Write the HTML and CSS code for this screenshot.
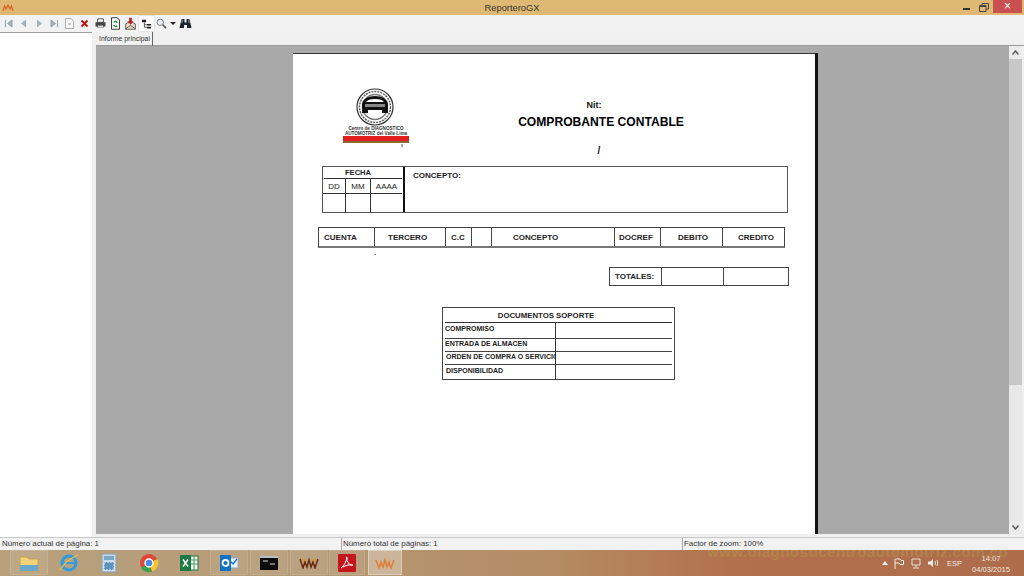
FILE: index.html
```html
<!DOCTYPE html>
<html>
<head>
  <meta charset="UTF-8">
  <title>ReporteroGX</title>
  <link rel="stylesheet" href="styles.css">
</head>
<body>
  <div class="window">
    <div class="titlebar">
      <svg class="app-icon" width="12" height="8" viewBox="0 0 12 8"><path d="M1 7 L2.5 2 L4 5 L6 1 L8 5 L9.5 2 L11 7" fill="none" stroke="#d9662a" stroke-width="1.3"/></svg>
      <div class="title">ReporteroGX</div>
      <div class="win-controls">
        <div class="win-min"></div>
        <svg class="win-restore" width="10" height="9" viewBox="0 0 10 9"><path d="M3 2 V0.5 H9.5 V6 H7.5 M0.5 2.5 H7 V8.5 H0.5 Z M0.5 3.5 H7" fill="none" stroke="#444"/></svg>
        <div class="win-close">×</div>
      </div>
    </div>

    <div class="toolbar">
      <svg class="tool" width="15" height="15" viewBox="0 0 15 15"><path d="M4.5 4 V11 M11 4 L6.5 7.5 L11 11 Z" fill="#a8b0b8" stroke="#98a0a8"/></svg>
      <svg class="tool" width="15" height="15" viewBox="0 0 15 15"><path d="M10 3.5 L5 7.5 L10 11.5 Z" fill="#a8b0b8"/></svg>
      <svg class="tool" width="15" height="15" viewBox="0 0 15 15"><path d="M5 3.5 L10 7.5 L5 11.5 Z" fill="#a8b0b8"/></svg>
      <svg class="tool" width="15" height="15" viewBox="0 0 15 15"><path d="M10.5 4 V11 M4 4 L8.5 7.5 L4 11 Z" fill="#a8b0b8" stroke="#98a0a8"/></svg>
      <svg class="tool" width="15" height="15" viewBox="0 0 15 15"><path d="M3.5 2.5 H9 L11.5 5 V12.5 H3.5 Z" fill="#f8f8f8" stroke="#b0b0b0"/><path d="M6 8 H9" stroke="#999"/></svg>
      <svg class="tool" width="15" height="15" viewBox="0 0 15 15"><path d="M4.5 4.5 L10.5 10.5 M10.5 4.5 L4.5 10.5" stroke="#c01818" stroke-width="2"/></svg>
      <svg class="tool" width="15" height="15" viewBox="-1.5 -1.5 18 18"><path d="M4 2 H11 V6 H4 Z" fill="#fff" stroke="#333"/><path d="M1.5 6 H13.5 V11 H11 V13 H4 V11 H1.5 Z" fill="#444"/><path d="M4.5 10 H10.5 V12.5 H4.5 Z" fill="#ddd"/></svg>
      <svg class="tool" width="15" height="15" viewBox="-1 -1 17 17"><path d="M3 1 H9.5 L12 3.5 V14 H3 Z" fill="#fff" stroke="#222"/><path d="M5.5 6 A2.5 2.5 0 0 1 9.5 6.5 M9.5 10 A2.5 2.5 0 0 1 5.5 9.5" fill="none" stroke="#1a9030" stroke-width="1.5"/></svg>
      <svg class="tool" width="15" height="15" viewBox="-1 -1 17 17"><path d="M2 8 L7.5 5 L13 8 V14 H2 Z" fill="#e8dcc8" stroke="#555"/><path d="M6 1 H9 V5 H11 L7.5 9 L4 5 H6 Z" fill="#b82020"/><path d="M2 13.5 L7 10 H8 L13 13.5" fill="none" stroke="#555"/></svg>
      <svg class="tool tool-active" width="15" height="15" viewBox="-1.5 -1.5 18 18"><path d="M2 3 H7 V6 H2 Z M8 8 H13 V10 H8 Z M8 11.5 H13 V13.5 H8 Z" fill="#222"/><path d="M5 6 V12 H8 M5 9 H8" fill="none" stroke="#444"/></svg>
      <svg class="tool" width="15" height="15" viewBox="-1.5 -1.5 18 18"><circle cx="6" cy="6" r="3.8" fill="#eef3f8" stroke="#667"/><path d="M9 9 L13 13" stroke="#555" stroke-width="2"/></svg>
      <svg class="tool-arrow" width="6" height="3" viewBox="0 0 6 3"><path d="M0 0 H6 L3 3 Z" fill="#222"/></svg>
      <svg class="tool" width="15" height="15" viewBox="0 0 15 15"><path d="M3.5 3 H6.5 V6.5 H8.5 V3 H11.5 L13.5 12 H9 V9 H6 V12 H1.5 Z" fill="#1c2430"/><path d="M4 3 V7 M11 3 V7" stroke="#8c96a4"/></svg>
    </div>

    <div class="main">
      <div class="sidebar"></div>
      <div class="content">
        <div class="tabs"><div class="tab">Informe principal</div></div>
        <div class="viewer">
          <div class="viewer-canvas">
            <div class="page">
              <div class="report-head">
                <div class="logo">
                  <svg width="40" height="40" viewBox="0 0 40 40">
                    <circle cx="20" cy="20" r="18" fill="#fff" stroke="#333" stroke-width="1.2"/>
                    <circle cx="20" cy="20" r="15.5" fill="none" stroke="#555" stroke-width="1.4" stroke-dasharray="2 1"/>
                    <circle cx="20" cy="20" r="12.5" fill="none" stroke="#777" stroke-width="1.4"/>
                    <path d="M7 26 V17 Q9 9 20 9 Q31 9 33 17 V26 H27 V23 H13 V26 Z" fill="#111"/>
                    <path d="M11 15 Q13 12 20 12 Q27 12 29 15 Z" fill="#fff"/>
                    <path d="M10 17 H30 V20 H10 Z" fill="#888"/>
                  </svg>
                  <div class="logo-text">Centro de DIAGNOSTICO</div>
                  <div class="logo-text">AUTOMOTRIZ del Valle Lima</div>
                  <div class="logo-stripe"></div>
                  <div class="logo-mark"></div>
                </div>
                <div class="report-title">
                  <div class="nit">Nit:</div>
                  <h1 class="doc-name">COMPROBANTE CONTABLE</h1>
                  <div class="slash">/</div>
                </div>
              </div>

              <div class="concept-box">
                <div class="fecha">
                  <div class="fecha-title">FECHA</div>
                  <div class="fecha-cols">
                    <div class="fecha-cell">DD</div>
                    <div class="fecha-cell">MM</div>
                    <div class="fecha-cell fecha-cell-end">AAAA</div>
                    <div class="fecha-cell fecha-blank"></div>
                    <div class="fecha-cell fecha-blank"></div>
                    <div class="fecha-cell fecha-cell-end fecha-blank"></div>
                  </div>
                </div>
                <div class="concepto">CONCEPTO:</div>
              </div>

              <div class="entries">
                <div class="cell">CUENTA</div>
                <div class="cell">TERCERO</div>
                <div class="cell">C.C</div>
                <div class="cell"></div>
                <div class="cell">CONCEPTO</div>
                <div class="cell">DOCREF</div>
                <div class="cell">DEBITO</div>
                <div class="cell cell-end">CREDITO</div>
              </div>
              <div class="entries-gap"><span class="dot"></span></div>

              <div class="totals">
                <div class="cell">TOTALES:</div>
                <div class="cell"></div>
                <div class="cell cell-end"></div>
              </div>

              <div class="docs">
                <div class="docs-title">DOCUMENTOS SOPORTE</div>
                <div class="docs-row"><div class="docs-label">COMPROMISO</div><div></div></div>
                <div class="docs-row docs-row-short"><div class="docs-label">ENTRADA DE ALMACEN</div><div></div></div>
                <div class="docs-row docs-row-short"><div class="docs-label docs-label-in">ORDEN DE COMPRA O SERVICIO</div><div></div></div>
                <div class="docs-row docs-row-last"><div class="docs-label docs-label-in">DISPONIBILIDAD</div><div></div></div>
              </div>
            </div>
          </div>
          <div class="scrollbar">
            <div class="scroll-btn"><svg width="7" height="5" viewBox="0 0 7 5"><path d="M0.5 4.5 L3.5 1 L6.5 4.5" fill="none" stroke="#555" stroke-width="1.4"/></svg></div>
            <div class="scroll-thumb"></div>
            <div class="scroll-track"></div>
            <div class="scroll-btn"><svg width="7" height="5" viewBox="0 0 7 5"><path d="M0.5 0.5 L3.5 4 L6.5 0.5" fill="none" stroke="#555" stroke-width="1.4"/></svg></div>
          </div>
        </div>
      </div>
    </div>

    <div class="statusbar">
      <div class="status status-a">Número actual de página: 1</div>
      <div class="status status-b">Número total de páginas: 1</div>
      <div class="status">Factor de zoom: 100%</div>
    </div>

    <div class="taskbar">
      <div class="watermark">www.diagnosticentroautomotriz.com.co</div>
      <div class="task-btn task-framed">
        <svg width="22" height="20" viewBox="0 0 22 20"><path d="M2 4 H9 L11 6 H20 V18 H2 Z" fill="#f3d27a" stroke="#c9a24a"/><path d="M2 12 H20 V18 H2 Z" fill="#6aa8cc"/></svg>
      </div>
      <div class="task-btn">
        <svg width="22" height="22" viewBox="0 0 22 22"><ellipse cx="11" cy="11" rx="7" ry="7" fill="none" stroke="#2f9ce0" stroke-width="3"/><path d="M5 11 H17" stroke="#2f9ce0" stroke-width="2"/><path d="M2 18 Q8 8 20 3" fill="none" stroke="#f0c040" stroke-width="1.3"/></svg>
      </div>
      <div class="task-btn">
        <svg width="16" height="20" viewBox="0 0 16 20"><rect x="1" y="1" width="14" height="18" fill="#c8d8e6" stroke="#8aa0b4"/><rect x="3" y="3" width="10" height="4" fill="#7aa6c8"/><path d="M3 9 H13 V17 H3 Z" fill="#5f93bc" stroke="#e4eef6" stroke-dasharray="2 1"/></svg>
      </div>
      <div class="task-btn">
        <svg width="20" height="20" viewBox="0 0 20 20"><circle cx="10" cy="10" r="9" fill="#e0443a"/><path d="M10 10 L2 15 A9 9 0 0 0 13 18.5 Z" fill="#3aa04a"/><path d="M10 10 L13 18.5 A9 9 0 0 0 18.5 6 Z" fill="#f4c430"/><circle cx="10" cy="10" r="4" fill="#4a8ae0" stroke="#fff" stroke-width="1.4"/></svg>
      </div>
      <div class="task-btn">
        <svg width="20" height="18" viewBox="0 0 20 18"><rect x="8" y="2" width="11" height="14" fill="#e8f0e8" stroke="#1e7a45"/><path d="M11 2 V16 M15 2 V16 M8 6 H19 M8 10 H19" stroke="#1e7a45" stroke-width="0.7"/><rect x="1" y="1" width="11" height="16" fill="#1e7a45"/><path d="M4 5.5 L9 12.5 M9 5.5 L4 12.5" stroke="#fff" stroke-width="1.5"/></svg>
      </div>
      <div class="task-btn task-framed">
        <svg width="20" height="18" viewBox="0 0 20 18"><rect x="10" y="4" width="9" height="10" fill="#e8f0f8" stroke="#9ab"/><path d="M11 7 L14 10 L18 5" fill="none" stroke="#1878c8" stroke-width="1.4"/><rect x="1" y="1" width="11" height="16" fill="#1072c4"/><circle cx="6.5" cy="9" r="3" fill="none" stroke="#fff" stroke-width="1.8"/></svg>
      </div>
      <div class="task-btn task-framed">
        <svg width="18" height="14" viewBox="0 0 18 14"><rect width="18" height="14" fill="#0c0c0c"/><rect y="0" width="18" height="2" fill="#b8c0c4"/><path d="M3 5 H8 M10 8 H15" stroke="#ddd"/></svg>
      </div>
      <div class="task-btn task-framed">
        <svg width="20" height="12" viewBox="0 0 20 12"><path d="M1 2 L4 11 L6 5 L8 10 L10 3 L12 10 L14 5 L16 11 L19 2" fill="none" stroke="#6a2c10" stroke-width="1.5"/><path d="M3 3 H7 M12 3 H17" stroke="#d8902a" stroke-width="1.4"/></svg>
      </div>
      <div class="task-btn task-framed task-pdf">
        <svg width="18" height="18" viewBox="0 0 18 18"><rect width="18" height="18" rx="1" fill="#c4161c"/><path d="M3 14 Q7 11 9 5 Q9.5 3 8.5 3 Q8 6 11 10 Q13 12 15 11 Q11 10 7 12 Q4 13 3 14 Z" fill="none" stroke="#fff" stroke-width="1"/></svg>
      </div>
      <div class="task-btn task-active">
        <svg width="20" height="12" viewBox="0 0 20 12"><path d="M1 3 L4 11 L6 5 L8 10 L10 3 L12 10 L14 5 L16 11 L19 3" fill="none" stroke="#e08038" stroke-width="1.6"/></svg>
      </div>
      <div class="tray">
        <svg class="tray-icon" width="6" height="4" viewBox="0 0 6 4"><path d="M0 4 L3 0 L6 4 Z" fill="#eee"/></svg>
        <svg class="tray-icon" width="10" height="11" viewBox="0 0 10 11"><path d="M1 1 V11" stroke="#eee"/><path d="M1.5 1 H6 L7 2.5 H9.5 V6.5 H6 L5 5 H1.5" fill="none" stroke="#eee"/></svg>
        <svg class="tray-icon" width="12" height="11" viewBox="0 0 12 11"><path d="M2 1 H10 V7 H2 Z M6 7 V10 M3 10 H9" fill="none" stroke="#e6e0d8"/></svg>
        <svg class="tray-icon" width="11" height="10" viewBox="0 0 11 10"><path d="M0 3.5 H2.5 L5 1 V9 L2.5 6.5 H0 Z" fill="#eee"/><path d="M7 3 Q8 5 7 7 M9 2 Q10.5 5 9 8" fill="none" stroke="#e6e0d8"/></svg>
        <div class="tray-lang">ESP</div>
        <div class="clock">
          <div>14:07</div>
          <div>04/03/2015</div>
        </div>
      </div>
    </div>
  </div>
</body>
</html>
```

FILE: styles.css
```css
body {
  margin: 0;
  padding: 0;
  font-family: "Liberation Sans", Arial, sans-serif;
  background-color: #f0f0f0;
  color: #111;
}

.window {
  width: 1024px;
  height: 576px;
  display: flex;
  flex-direction: column;
  overflow: hidden;
}

/* barra de titulo */
.titlebar {
  height: 15px;
  flex: none;
  background-color: #dfb873;
  display: flex;
  align-items: center;
  position: relative;
}

.app-icon {
  margin-left: 2px;
}

.title {
  position: absolute;
  left: 0;
  right: 0;
  text-align: center;
  font-size: 9.3px;
  color: #333;
}

.win-controls {
  margin-left: auto;
  margin-right: 2px;
  display: flex;
  align-items: flex-start;
  height: 100%;
}

.win-min {
  width: 7px;
  height: 2px;
  background-color: #333;
  margin-top: 8px;
  margin-right: 9px;
}

.win-restore {
  margin-top: 3px;
  margin-right: 4px;
}

.win-close {
  width: 29px;
  height: 13px;
  background-color: #c9504f;
  color: #fff;
  font-size: 12px;
  line-height: 12px;
  text-align: center;
}

/* barra de herramientas */
.toolbar {
  height: 17px;
  flex: none;
  display: flex;
  align-items: center;
  padding-left: 1px;
  background-color: #f2f2f2;
}

.tool {
  width: 15px;
  height: 15px;
  flex: none;
  margin-right: 0.3px;
}

.tool-active {
  background-color: #fafafa;
  box-shadow: 0 0 0 1px #e4e4e4;
}

.tool-arrow {
  margin-left: 1px;
  margin-right: 1.5px;
}

.main {
  height: 505px;
  flex: none;
  display: flex;
}

.sidebar {
  width: 92px;
  flex: none;
  background-color: #fff;
  border-top: 1px solid #a0a0a0;
  box-sizing: border-box;
}

.content {
  flex: 1;
  min-width: 0;
  display: flex;
  flex-direction: column;
  padding-left: 4px;
}

.tabs {
  height: 13px;
  flex: none;
  border-bottom: 1px solid #9a9a9a;
}

.tab {
  width: 57px;
  height: 14px;
  box-sizing: border-box;
  border-right: 1px solid #666;
  font-size: 6.9px;
  line-height: 13px;
  padding-left: 3px;
  color: #333;
  white-space: nowrap;
}

.viewer {
  height: 488px;
  flex: none;
  display: flex;
  margin-right: 2px;
}

.viewer-canvas {
  flex: 1;
  min-width: 0;
  background-color: #a9a9a9;
  overflow: hidden;
  padding-top: 7px;
  padding-left: 197px;
  box-sizing: border-box;
}

.scrollbar {
  width: 13px;
  flex: none;
  display: flex;
  flex-direction: column;
  background-color: #e8e8e8;
}

.scroll-btn {
  height: 13px;
  flex: none;
  display: flex;
  align-items: center;
  justify-content: center;
  background-color: #ececec;
}

.scroll-thumb {
  height: 326px;
  flex: none;
  background-color: #c8c8c8;
}

.scroll-track {
  flex: 1;
}

/* hoja del informe */
.page {
  width: 522px;
  height: 600px;
  background-color: #fff;
  box-shadow: 3px 0 0 #111;
  border-top: 1px solid #333;
  box-sizing: border-box;
}

.report-head {
  height: 112px;
  display: flex;
}

.logo {
  width: 66px;
  margin-left: 50px;
  padding-top: 33px;
  box-sizing: border-box;
  display: flex;
  flex-direction: column;
  align-items: center;
}

.logo svg {
  flex: none;
  margin-right: 2px;
}

.logo-text {
  font-size: 4.6px;
  line-height: 4.5px;
  font-weight: bold;
  color: #333;
  white-space: nowrap;
}

.logo-stripe {
  width: 66px;
  height: 7px;
  flex: none;
  background-color: #e01c1c;
  border-bottom: 2px solid #8a6a30;
  box-sizing: border-box;
}

.logo-mark {
  width: 2px;
  height: 3px;
  margin-top: 1px;
  margin-left: 52px;
  background-color: #aaa;
}

.report-title {
  width: 384px;
  text-align: center;
  padding-top: 46px;
  box-sizing: border-box;
  font-weight: bold;
}

.nit {
  font-size: 9px;
  line-height: 10px;
  padding-right: 14px;
}

.doc-name {
  margin: 5px 0 0;
  font-size: 12.1px;
  line-height: 14px;
  font-weight: bold;
  color: #000;
}

.slash {
  margin-top: 16px;
  font-size: 10px;
  line-height: 12px;
  padding-right: 4px;
}

.concept-box {
  margin-left: 29px;
  width: 466px;
  height: 47px;
  box-sizing: border-box;
  border: 1px solid #555;
  display: flex;
  font-size: 8px;
  color: #222;
}

.fecha {
  width: 82px;
  flex: none;
  border-right: 2px solid #111;
  box-sizing: border-box;
  padding: 0 1px;
  text-align: center;
}

.fecha-title {
  height: 12px;
  line-height: 11px;
  font-weight: bold;
  font-size: 7.6px;
  padding-right: 10px;
  border-bottom: 1px solid #333;
  box-sizing: border-box;
}

.fecha-cols {
  display: grid;
  grid-template-columns: 23px 25px 31px;
  grid-template-rows: 15px 19px;
  margin: 0 -1px;
}

.fecha-cell {
  border-right: 1px solid #333;
  border-bottom: 1px solid #333;
  line-height: 15px;
}

.fecha-cell-end {
  border-right: none;
}

.fecha-blank {
  border-bottom: none;
}

.concepto {
  padding: 4px 0 0 8px;
  font-weight: bold;
}

.entries {
  margin-top: 14px;
  margin-left: 25px;
  width: 467px;
  height: 21px;
  box-sizing: border-box;
  border: 1px solid #444;
  border-bottom: 2px solid #777;
  display: grid;
  grid-template-columns: 56px 71px 26px 20px 123px 46px 62px 61px;
  font-size: 8px;
}

.totals {
  margin-left: 316px;
  width: 180px;
  height: 19px;
  box-sizing: border-box;
  border: 1px solid #444;
  display: grid;
  grid-template-columns: 52px 62px 64px;
  font-size: 8px;
}

.cell {
  border-right: 1px solid #444;
  display: flex;
  align-items: center;
  padding-left: 5px;
  font-weight: bold;
  color: #222;
  white-space: nowrap;
}

.entries .cell:nth-child(2) {
  padding-left: 13px;
}

.entries .cell:nth-child(5) {
  padding-left: 21px;
}

.entries .cell:nth-child(6) {
  padding-left: 4px;
}

.entries .cell:nth-child(7) {
  padding-left: 17px;
}

.entries .cell:nth-child(8) {
  padding-left: 15px;
}

.cell-end {
  border-right: none;
}

.entries-gap {
  height: 19px;
  padding-left: 81px;
  box-sizing: border-box;
  padding-top: 6px;
}

.dot {
  display: block;
  width: 2px;
  height: 1px;
  background-color: #999;
}

.docs {
  margin-top: 21px;
  margin-left: 149px;
  width: 233px;
  height: 73px;
  box-sizing: border-box;
  border: 1px solid #444;
  padding: 0 2px;
  font-weight: bold;
  color: #222;
}

.docs-title {
  height: 14px;
  line-height: 15px;
  font-size: 7.8px;
  text-align: center;
  padding-right: 25px;
  border-bottom: 1px solid #333;
}

.docs-row {
  height: 16px;
  box-sizing: border-box;
  border-bottom: 1px solid #444;
  display: flex;
  font-size: 7px;
  line-height: 11px;
}

.docs-row-short {
  height: 13px;
  line-height: 9px;
}

.docs-row-last {
  height: 15px;
  border-bottom: none;
}

.docs-label {
  width: 111px;
  flex: none;
  border-right: 1px solid #333;
  box-sizing: border-box;
  white-space: nowrap;
  overflow: hidden;
}

.docs-label-in {
  padding-left: 1px;
}

/* barra de estado */
.statusbar {
  height: 13px;
  flex: none;
  display: flex;
  border-top: 1px solid #c8c8c8;
  box-sizing: border-box;
  font-size: 7.9px;
  line-height: 12px;
  color: #333;
  background-color: #f2f2f2;
}

.status {
  padding-left: 1px;
  white-space: nowrap;
}

.status-a {
  width: 342px;
  padding-left: 2px;
  box-sizing: border-box;
  border-right: 1px solid #a8a8a8;
}

.status-b {
  width: 341px;
  padding-left: 1px;
  box-sizing: border-box;
  border-right: 1px solid #a8a8a8;
}

/* barra de tareas */
.taskbar {
  height: 26px;
  flex: none;
  display: flex;
  position: relative;
  overflow: hidden;
  padding-left: 10px;
  background: linear-gradient(90deg, #b9a17d 0%, #b59a76 30%, #b48a63 55%, #b2704c 72%, #ad6c4c 100%);
}

.watermark {
  position: absolute;
  left: 707px;
  top: -2px;
  line-height: 7px;
  font-size: 15.3px;
  font-weight: bold;
  letter-spacing: 0.3px;
  color: #b89a48;
  opacity: 0.45;
  white-space: nowrap;
}

.task-btn {
  width: 38px;
  height: 25px;
  margin-right: 2px;
  flex: none;
  display: flex;
  align-items: center;
  justify-content: center;
  box-sizing: border-box;
}

.task-framed {
  background-color: rgba(255, 255, 255, 0.08);
  box-shadow: inset 0 0 0 1px rgba(255, 255, 255, 0.1);
}

.task-pdf {
  width: 36px;
  margin-left: -1px;
  margin-right: 3px;
}

.task-active {
  width: 34px;
  background-color: rgba(255, 255, 255, 0.3);
  box-shadow: inset 0 0 0 1px rgba(255, 255, 255, 0.35);
}

.tray {
  margin-left: auto;
  display: flex;
  align-items: center;
  color: #f0e8e0;
  font-size: 7.5px;
  padding-right: 14px;
}

.tray-icon {
  margin-right: 6px;
}

.tray-lang {
  margin-left: 2px;
  margin-right: 10px;
}

.clock {
  text-align: center;
  line-height: 11px;
  font-size: 7.6px;
  padding-top: 1px;
}
```
